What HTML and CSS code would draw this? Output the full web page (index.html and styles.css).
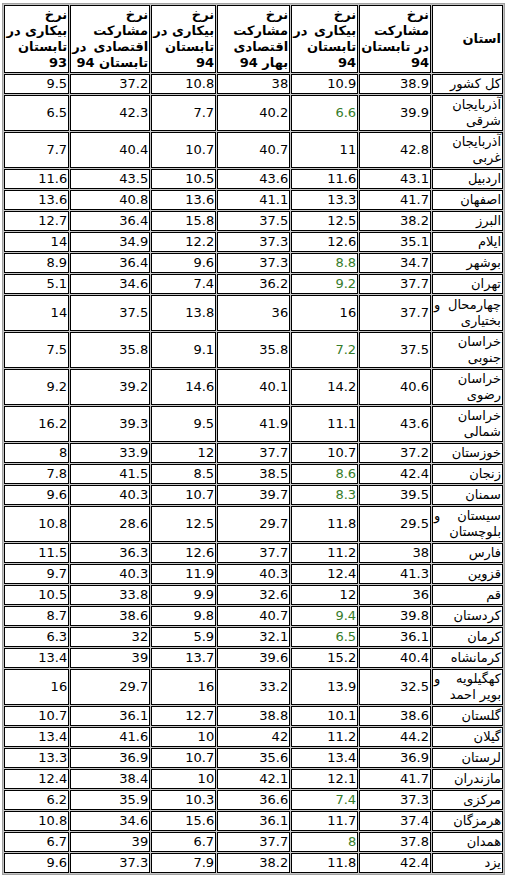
FILE: index.html
```html
<!DOCTYPE html>
<html lang="fa" dir="rtl">
<head>
<meta charset="utf-8">
<title>نرخ مشارکت و بیکاری استان‌ها</title>
<link rel="stylesheet" href="styles.css">
</head>
<body>
<table class="stats">
<thead>
<tr>
<th class="w-prov">استان</th>
<th class="w-c6"><div class="ln">نرخ</div><div class="ln">مشارکت</div><div class="ln j">در تابستان</div><div class="ln">94</div></th>
<th class="w-c5"><div class="ln">نرخ</div><div class="ln j">بیکاری در</div><div class="ln">تابستان</div><div class="ln">94</div></th>
<th class="w-c4"><div class="ln">نرخ</div><div class="ln">مشارکت</div><div class="ln">اقتصادی</div><div class="ln">بهار 94</div></th>
<th class="w-c3"><div class="ln">نرخ</div><div class="ln j">بیکاری در</div><div class="ln">تابستان</div><div class="ln">94</div></th>
<th class="w-c2"><div class="ln">نرخ</div><div class="ln">مشارکت</div><div class="ln j">اقتصادی در</div><div class="ln">تابستان 94</div></th>
<th class="w-c1"><div class="ln">نرخ</div><div class="ln j">بیکاری در</div><div class="ln">تابستان</div><div class="ln">93</div></th>
</tr>
</thead>
<tbody>
<tr><td>کل کشور</td><td>38.9</td><td>10.9</td><td>38</td><td>10.8</td><td>37.2</td><td>9.5</td></tr>
<tr><td><div class="ln">آذربایجان</div><div class="ln">شرقی</div></td><td>39.9</td><td class="pos">6.6</td><td>40.2</td><td>7.7</td><td>42.3</td><td>6.5</td></tr>
<tr><td><div class="ln">آذربایجان</div><div class="ln">غربی</div></td><td>42.8</td><td>11</td><td>40.7</td><td>10.7</td><td>40.4</td><td>7.7</td></tr>
<tr><td>اردبیل</td><td>43.1</td><td>11.6</td><td>43.6</td><td>10.5</td><td>43.5</td><td>11.6</td></tr>
<tr><td>اصفهان</td><td>41.7</td><td>13.3</td><td>41.1</td><td>13.6</td><td>40.8</td><td>13.6</td></tr>
<tr><td>البرز</td><td>38.2</td><td>12.5</td><td>37.5</td><td>15.8</td><td>36.4</td><td>12.7</td></tr>
<tr><td>ایلام</td><td>35.1</td><td>12.6</td><td>37.3</td><td>12.2</td><td>34.9</td><td>14</td></tr>
<tr><td>بوشهر</td><td>34.7</td><td class="pos">8.8</td><td>37.3</td><td>9.6</td><td>36.4</td><td>8.9</td></tr>
<tr><td>تهران</td><td>37.7</td><td class="pos">9.2</td><td>36.2</td><td>7.4</td><td>34.6</td><td>5.1</td></tr>
<tr><td><div class="ln j">چهارمحال و</div><div class="ln">بختیاری</div></td><td>37.7</td><td>16</td><td>36</td><td>13.8</td><td>37.5</td><td>14</td></tr>
<tr><td><div class="ln">خراسان</div><div class="ln">جنوبی</div></td><td>37.5</td><td class="pos">7.2</td><td>35.8</td><td>9.1</td><td>35.8</td><td>7.5</td></tr>
<tr><td><div class="ln">خراسان</div><div class="ln">رضوی</div></td><td>40.6</td><td>14.2</td><td>40.1</td><td>14.6</td><td>39.2</td><td>9.2</td></tr>
<tr><td><div class="ln">خراسان</div><div class="ln">شمالی</div></td><td>43.6</td><td>11.1</td><td>41.9</td><td>9.5</td><td>39.3</td><td>16.2</td></tr>
<tr><td>خوزستان</td><td>37.2</td><td>10.7</td><td>37.7</td><td>12</td><td>33.9</td><td>8</td></tr>
<tr><td>زنجان</td><td>42.4</td><td class="pos">8.6</td><td>38.5</td><td>8.5</td><td>41.5</td><td>7.8</td></tr>
<tr><td>سمنان</td><td>39.5</td><td class="pos">8.3</td><td>39.7</td><td>10.7</td><td>40.3</td><td>9.6</td></tr>
<tr><td><div class="ln j">سیستان و</div><div class="ln">بلوچستان</div></td><td>29.5</td><td>11.8</td><td>29.7</td><td>12.5</td><td>28.6</td><td>10.8</td></tr>
<tr><td>فارس</td><td>38</td><td>11.2</td><td>37.7</td><td>12.6</td><td>36.3</td><td>11.5</td></tr>
<tr><td>قزوین</td><td>41.3</td><td>12.4</td><td>40.3</td><td>11.9</td><td>40.3</td><td>9.7</td></tr>
<tr><td>قم</td><td>36</td><td>12</td><td>32.6</td><td>9.9</td><td>33.8</td><td>10.5</td></tr>
<tr><td>کردستان</td><td>39.8</td><td class="pos">9.4</td><td>40.7</td><td>9.8</td><td>38.6</td><td>8.7</td></tr>
<tr><td>کرمان</td><td>36.1</td><td class="pos">6.5</td><td>32.1</td><td>5.9</td><td>32</td><td>6.3</td></tr>
<tr><td>کرمانشاه</td><td>40.4</td><td>15.2</td><td>39.6</td><td>13.7</td><td>39</td><td>13.4</td></tr>
<tr><td><div class="ln j">کهگیلویه و</div><div class="ln">بویر احمد</div></td><td>32.5</td><td>13.9</td><td>33.2</td><td>16</td><td>29.7</td><td>16</td></tr>
<tr><td>گلستان</td><td>38.6</td><td>10.1</td><td>38.8</td><td>12.7</td><td>36.1</td><td>10.7</td></tr>
<tr><td>گیلان</td><td>44.2</td><td>11.2</td><td>42</td><td>10</td><td>41.6</td><td>13.4</td></tr>
<tr><td>لرستان</td><td>36.9</td><td>13.4</td><td>35.6</td><td>10.7</td><td>36.9</td><td>13.3</td></tr>
<tr><td>مازندران</td><td>41.7</td><td>12.1</td><td>42.1</td><td>10</td><td>38.4</td><td>12.4</td></tr>
<tr><td>مرکزی</td><td>37.3</td><td class="pos">7.4</td><td>36.6</td><td>10.3</td><td>35.9</td><td>6.2</td></tr>
<tr><td>هرمزگان</td><td>37.4</td><td>11.7</td><td>36.1</td><td>15.6</td><td>34.6</td><td>10.8</td></tr>
<tr><td>همدان</td><td>37.8</td><td class="pos">8</td><td>37.7</td><td>6.7</td><td>39</td><td>6.7</td></tr>
<tr><td>یزد</td><td>42.4</td><td>11.8</td><td>38.2</td><td>7.9</td><td>37.3</td><td>9.6</td></tr>
</tbody>
</table>
</body>
</html>
```

FILE: styles.css
```css
html, body {
  margin: 0;
  padding: 0;
  background: #fff;
}

body {
  padding-top: 3px;
  font-family: "DejaVu Sans", Tahoma, sans-serif;
  font-size: 13px;
  color: #000;
}

.stats {
  border-collapse: separate;
  border-spacing: 1px;
  border: 1px solid #a0a0a0;
  background: #c4c4c4;
}

.stats th,
.stats td {
  border: 1px solid #000;
  padding: 1px;
  line-height: 16px;
  text-align: right;
  vertical-align: middle;
  background: #fff;
  white-space: nowrap;
}

.stats th {
  font-weight: bold;
}

.ln {
  white-space: nowrap;
}

.j {
  text-align: justify;
  text-align-last: justify;
}

.w-prov { width: 67px; }
.w-c6 { width: 67px; }
.w-c5 { width: 63px; }
.w-c4 { width: 69px; }
.w-c3 { width: 61px; }
.w-c2 { width: 76px; }
.w-c1 { width: 60px; }

.pos {
  color: #367c2b;
}
```
